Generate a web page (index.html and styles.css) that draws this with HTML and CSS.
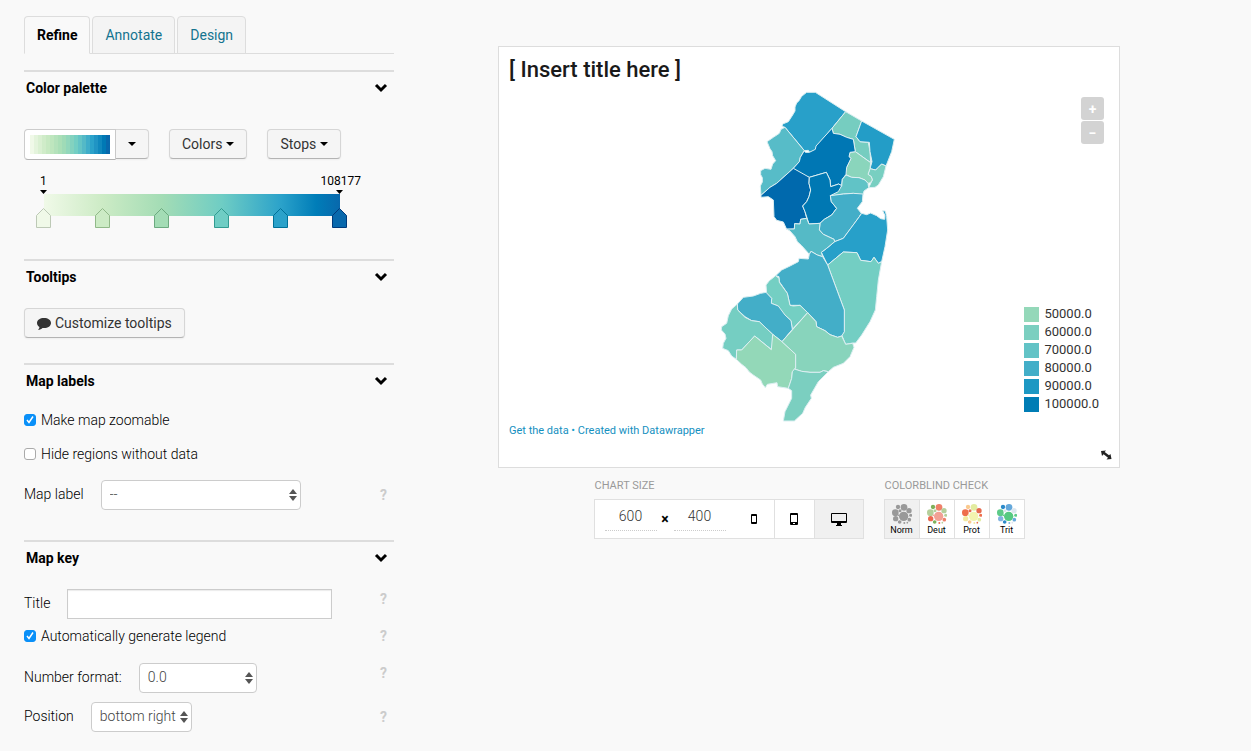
FILE: index.html
```html
<!DOCTYPE html>
<html lang="en">
<head>
<meta charset="utf-8">
<title>Chart editor</title>
<link rel="stylesheet" href="styles.css">
</head>
<body>
<svg class="defs" width="0" height="0" aria-hidden="true">
  <symbol id="chevron" viewBox="0 0 14 10"><path d="M2 2l5 5 5-5" fill="none" stroke="#000" stroke-width="3"/></symbol>
  <symbol id="blobs" viewBox="0 0 60 60">
    <circle cx="35" cy="37" r="14" fill="var(--a)"/><circle cx="36" cy="10" r="10" fill="var(--b)"/>
    <circle cx="10" cy="26" r="10" fill="var(--c)"/><circle cx="51" cy="20" r="8" fill="var(--d)"/>
    <circle cx="11" cy="44" r="8" fill="var(--e)"/><circle cx="18" cy="9" r="6.500" fill="var(--f)"/>
    <circle cx="23" cy="54" r="5.500" fill="var(--f)"/><circle cx="56" cy="34" r="4.500" fill="var(--c)"/>
    <circle cx="52" cy="47" r="5.500" fill="var(--b)"/><circle cx="24" cy="20" r="4.500" fill="var(--d)"/>
    <circle cx="37" cy="57" r="3" fill="var(--e)"/><circle cx="46" cy="56" r="2.500" fill="var(--d)"/>
    <circle cx="19" cy="34" r="2.500" fill="var(--a)"/>
  </symbol>
</svg>
<div class="page">
  <aside class="sidebar">
    <nav class="tabs">
      <a class="tab active" href="#refine">Refine</a>
      <a class="tab" href="#annotate">Annotate</a>
      <a class="tab" href="#design">Design</a>
    </nav>

    <section class="section palette">
      <h3>Color palette <svg class="chevron"><use href="#chevron"/></svg></h3>
      <div class="palette-row">
        <div class="split">
          <button class="swatch" aria-label="Current palette"><span class="ramp"></span></button>
          <button class="btn toggle" aria-label="Choose palette"><span class="caret"></span></button>
        </div>
        <button class="btn">Colors<span class="caret"></span></button>
        <button class="btn">Stops<span class="caret"></span></button>
      </div>
      <div class="scale">
        <div class="scale-labels"><span>1</span><span>108177</span></div>
        <svg class="scale-bar" width="313" height="40" viewBox="0 0 313 40">
          <defs><linearGradient id="ramp">
            <stop offset="0" stop-color="#f0f9e8"/><stop offset=".2" stop-color="#ccebc5"/>
            <stop offset=".4" stop-color="#a3dcb5"/><stop offset=".6" stop-color="#6fcdc4"/>
            <stop offset=".8" stop-color="#2ba2ca"/><stop offset=".92" stop-color="#007db8"/><stop offset="1" stop-color="#0868ac"/>
          </linearGradient></defs>
          <rect x="8" y="6" width="296" height="22" fill="url(#ramp)"/>
          <path d="M4 2h7l-3.500 4zM300 2h7l-3.500 4z"/>
          <path d="M.5 39.500v-12l7-7 7 7v12z" fill="#f0f9e8" stroke="#bdc9b6"/>
          <path d="M59.500 39.500v-12l7-7 7 7v12z" fill="#ccebc5" stroke="#91b989"/>
          <path d="M118.500 39.500v-12l7-7 7 7v12z" fill="#a3dcb5" stroke="#6caa80"/>
          <path d="M178.500 39.500v-12l7-7 7 7v12z" fill="#6fcdc4" stroke="#329b91"/>
          <path d="M237.500 39.500v-12l7-7 7 7v12z" fill="#2ba2ca" stroke="#007198"/>
          <path d="M296.500 39.500v-12l7-7 7 7v12z" fill="#0868ac" stroke="#003a7b"/>
        </svg>
      </div>
    </section>

    <section class="section tooltips">
      <h3>Tooltips <svg class="chevron"><use href="#chevron"/></svg></h3>
      <button class="btn"><svg class="comment" width="14" height="13" viewBox="0 0 14 13"><path d="M7 1c4 0 7 2 7 5s-3 5-7 5l-1.500-.1C4.500 12 3 12.600 1 12.700c1-.8 1.400-1.600 1.400-2.700C1 9.100 0 7.700 0 6c0-3 3-5 7-5z" fill="#333"/></svg>Customize tooltips</button>
    </section>

    <section class="section labels">
      <h3>Map labels <svg class="chevron"><use href="#chevron"/></svg></h3>
      <label class="check"><input type="checkbox" checked>Make map zoomable</label>
      <label class="check"><input type="checkbox">Hide regions without data</label>
      <div class="field">
        <label for="map-label">Map label</label>
        <span class="select wide"><select id="map-label"><option>--</option></select></span>
        <span class="help">?</span>
      </div>
    </section>

    <section class="section key">
      <h3>Map key <svg class="chevron"><use href="#chevron"/></svg></h3>
      <div class="field title-field">
        <label for="title">Title</label>
        <input id="title" class="text" type="text">
        <span class="help">?</span>
      </div>
      <div class="field legend-field">
        <label class="check"><input type="checkbox" checked>Automatically generate legend</label>
        <span class="help">?</span>
      </div>
      <div class="field format-field">
        <label for="format">Number format:</label>
        <span class="select medium"><select id="format"><option>0.0</option></select></span>
        <span class="help">?</span>
      </div>
      <div class="field">
        <label for="position">Position</label>
        <span class="select small"><select id="position"><option>bottom right</option></select></span>
        <span class="help">?</span>
      </div>
    </section>
  </aside>

  <main class="preview">
    <div class="chart">
      <h1>[ Insert title here ]</h1>
      <svg class="map" width="200" height="350" viewBox="-3 0 600 1050" role="img" aria-label="Map of New Jersey counties">
        <g stroke="#dceff2" stroke-width="3" stroke-linejoin="round">
          <path fill="#28a0c9" d="M216 139l2-7 17-7 13-20 7-12 0-12 5-12 7-7 8-13 15-12h26l91 58-41 50-41 47-2 10-7 10-11 5-7-1-3-5-12 1-58-70z"/>
          <path fill="#57bcc8" d="M225 142l58 70-12 20-3 13-18 20-50 45-20 12-27 24-2-28 6-12v-13l-5-9v-12l13-7 18 3 5-16 9-10-9-15-2-12-6-9-9-21 19-13 18-12 5-12z"/>
          <path fill="#76cdc0" d="M407 95l48 28-17 47 12 15 25 2 5 28 2 33-46-33-6-37-20-6-20-9-20-3-4-15z"/>
          <path fill="#239dc7" d="M455 123l98 55-8 37-17 43-13-6-10 10-8 8-17-4 6-21-6-30-2-28-28-2-12-15z"/>
          <path fill="#78cfc1" d="M480 266l17 4 8-8 10-10 13 6-8 32-15 25-10 7-19 1 11-23-3-10-10-7z"/>
          <path fill="#8ad5bc" d="M436 215l46 33-2 18-6 17 10 7 3 10-6 8-7 2-9-10-18-7-22-1-19-9 4-21 13-27-6-5 3-13z"/>
          <path fill="#0077b4" d="M366 145l4 15 20 3 20 9 20 6 6 37-16 2-3 13 6 5-13 27-2 21-11 15-2 19-9-5-24 8-2-20-11-23-51 15-34-9-14-18 18-20 3-13 12-20 3 5h12l18-9 2-10z"/>
          <path fill="#61c3c6" d="M408 285l17 7 22 1 18 7 9 10 2 13-14 10-3 12-29-5-30 2-38 6 15-12 18-17 2-21z"/>
          <path fill="#0069ad" d="M250 265l48 27-1 18 5 20-5 20-7 15-12 13 7 17 5 20-18 3-2 14-16-1-1 16-23 1-10-22-20-5-8-11-2-50-15-10-22 2v-6l27-24 20-12z"/>
          <path fill="#0078b3" d="M298 292l51-15 11 23 2 20 24-8 9 5-10 18-24 12 3 18 16 20-15 20-22 13-13 12-33 2-12-37-7-17 12-13 7-15 5-20-5-20z"/>
          <path fill="#43aec8" d="M361 347l39-5 30-2 29 2-2 23-15 20 12 15-6 10-18 25-30 40-26 10-2-7-32-15-12-13 2-20 13-12 22-13 15-20-16-20z"/>
          <path fill="#27a0c9" d="M448 410l7-10 15 4 12-5 18 8 12 9 12 2 1-11-7-15 8 1 4 17 3 40-8 50-10 45-10 5-13-18-9 13-31-4-11-23-41-2-47 39-19-38 16-12 24-20 26-10z"/>
          <path fill="#55bac6" d="M230 447l23 0 1-16 16 1 2-14 18-3 7 17 33-2-2 20 12 13 32 15 2 7-24 20-16 12 4 13-16-5-19-11-5 9-23-26-13-12-7-15-15-17z"/>
          <path fill="#73cec3" d="M353 555l47-39 41 2 11 23 31 4 9-13 13 18 10-5-10 55-5 50-4 40-16 35-25 40-18 24h-9l-21 4-12-28 8-10v-65z"/>
          <path fill="#43aec8" d="M303 514l19 11 16 5 15 25 50 135v65l-8 13-12 4-23-8-15-12-25-12-2-15-13-15-12-12-23-22h-30l-8-36-24-35-1-15-10-3 18-17 25-12 25-13 2-10 28 2 3-14z"/>
          <path fill="#74cfc3" d="M197 587l10 8 1 12 24 33 8 36 10 2 20-2 23 22-46 50-4-26-18-17-15-15-5-12-21-8 1-15-15-15-2-25 10-13z"/>
          <path fill="#43aec8" d="M168 637l17 18-1 15 21 8 20 27 18 17 4 26-31 37-28-22-40-38-23-3-20-12-22-20-1-18 18-20 30-4 22-8z"/>
          <path fill="#75cec2" d="M82 672l1 18 22 22 20 10 23 3 40 38v30l-2 17-52-42-39 42H80l-1 28-14-10-10-16-17-7 2-15 8-15-3-13-11-12 1-10 15-10 5-23 10-20z"/>
          <path fill="#93d8b8" d="M134 768l50 41 4-46 28 22 41 38v42l-10 10-2 20-10 30-32-5-2-12-29 5-6 10-9-11-5-12-22-15-12-9-10-13-13-10-16-15 1-28h15z"/>
          <path fill="#88d4bc" d="M293 698l25 27 2 15 25 12 15 12 23 8 12-4 12 25 21-3 4 12-12 28-20 20-30 12-15 13-15-3-10 5h-30l-25-3-22-7 4-2v-42l-41-38z"/>
          <path fill="#7bcfc0" d="M253 867l22 7 25 3h30l10-5 15 3-10 10-20 20-23 40 2 10-18 27-8 18-25 23h-33l5-28 20-40v-23l-10-7 10-30 2-20z"/>
        </g>
      </svg>
      <p class="credits"><a href="#data">Get the data</a> • <a href="#about">Created with Datawrapper</a></p>
      <div class="zoom"><button aria-label="Zoom in">+</button><button aria-label="Zoom out">−</button></div>
      <ul class="legend">
        <li><i class="c1"></i>50000.0</li><li><i class="c2"></i>60000.0</li><li><i class="c3"></i>70000.0</li>
        <li><i class="c4"></i>80000.0</li><li><i class="c5"></i>90000.0</li><li><i class="c6"></i>100000.0</li>
      </ul>
      <svg class="resize" width="11" height="10" viewBox="0 0 11 10"><path d="M0 1l5-.5-1.300 1.600 4.300 3.200L9.500 4l1 5-5 .5L7 7.700 2.600 4.300 1 6z" fill="#222"/></svg>
    </div>

    <div class="tools">
      <div class="tool">
        <h4>CHART SIZE</h4>
        <div class="bar">
          <div class="size">
            <input type="text" value="600" aria-label="Width">
            <span>×</span>
            <input type="text" value="400" aria-label="Height">
          </div>
          <button class="device" aria-label="Small phone"><svg width="6" height="10" viewBox="0 0 6 10"><path fill-rule="evenodd" d="M1 0h4q1 0 1 1v8q0 1-1 1H1q-1 0-1-1V1q0-1 1-1zM1 2v6h4V2z"/></svg></button>
          <button class="device" aria-label="Large phone"><svg width="8" height="12" viewBox="0 0 8 12"><path fill-rule="evenodd" d="M1 0h6q1 0 1 1v10q0 1-1 1H1q-1 0-1-1V1q0-1 1-1zM1 2v7h6V2zM3 10v1h2v-1z"/></svg></button>
          <button class="device desktop on" aria-label="Desktop"><svg width="16" height="13" viewBox="0 0 16 13"><path fill-rule="evenodd" d="M1 0h14q1 0 1 1v8q0 1-1 1h-5v2h1v1H5v-1h1v-2H1q-1 0-1-1V1q0-1 1-1zM1 1v7h14V1z"/></svg></button>
        </div>
      </div>
      <div class="tool">
        <h4>COLORBLIND CHECK</h4>
        <div class="bar">
          <button class="vision norm on"><svg width="20" height="20"><use href="#blobs"/></svg>Norm</button>
          <button class="vision deut"><svg width="20" height="20"><use href="#blobs"/></svg>Deut</button>
          <button class="vision prot"><svg width="20" height="20"><use href="#blobs"/></svg>Prot</button>
          <button class="vision trit"><svg width="20" height="20"><use href="#blobs"/></svg>Trit</button>
        </div>
      </div>
    </div>
  </main>
</div>
</body>
</html>
```
FILE: styles.css
```css
* { box-sizing: border-box; }
body {
  margin: 0;
  background: #f9f9f9;
  color: #000;
  font: 300 14px/20px Roboto, sans-serif;
}
button, input, select { font: inherit; margin: 0; }
a { text-decoration: none; }
h1, h3, h4, p, ul { margin: 0; padding: 0; }
.defs { position: absolute; }
.page { display: flex; align-items: flex-start; }

.sidebar { flex: none; width: 394px; padding: 16px 0 16px 24px; }
.tabs { display: flex; gap: 2px; height: 38px; margin-bottom: 16px; border-bottom: 1px solid #ddd; }
.tab {
  height: 38px;
  padding: 8px 12px;
  border: 1px solid #ddd;
  border-radius: 4px 4px 0 0;
  background: #f4f4f4;
  color: #13738f;
  font-weight: 400;
}
.tab.active { background: #f9f9f9; border-bottom-color: #f9f9f9; color: #000; font-weight: 700; }

.section { border-top: 2px solid #ddd; }
.section h3 {
  display: flex;
  align-items: center;
  justify-content: space-between;
  height: 32px;
  padding: 0 6px 0 2px;
  font-size: 14px;
  font-weight: 700;
}
.chevron { width: 14px; height: 10px; }
.palette { padding-bottom: 31px; }
.tooltips { padding-bottom: 25px; }
.tooltips .btn { margin-top: 15px; }
.labels { padding-bottom: 30px; }

.btn {
  display: flex;
  align-items: center;
  height: 30px;
  padding: 0 12px;
  border: 1px solid #d6d6d6;
  border-bottom-color: #b3b3b3;
  border-radius: 4px;
  background: #f5f5f5;
  box-shadow: 0 1px 2px rgba(0, 0, 0, .05);
  color: #333;
  font-weight: 400;
}
.comment { margin-right: 4px; }
.caret { margin-left: 4px; border: 4px solid transparent; border-top-color: #000; border-bottom: 0; }
.palette-row { display: flex; gap: 20px; margin-top: 25px; }
.split { display: flex; }
.swatch {
  width: 92px;
  padding: 5px;
  border: 1px solid #ccc;
  border-bottom-color: #b3b3b3;
  border-radius: 4px 0 0 4px;
  background: #fff;
}
.ramp {
  display: block;
  width: 80px;
  height: 19px;
  background: linear-gradient(90deg, #f0f9e8 5%, #e4f4dc 5% 10%, #daf0d2 10% 15%, #d0ecc9 15% 20%, #c7e9c2 20% 25%, #bee6be 25% 30%, #b4e2bb 30% 35%, #aadfb7 35% 40%, #9fdbb7 40% 45%, #92d7bb 45% 50%, #83d2bf 50% 55%, #73cec3 55% 60%, #64c4c6 60% 65%, #54b9c7 65% 70%, #40adc9 70% 75%, #2ba2ca 75% 80%, #2094c4 80% 85%, #1088bd 85% 90%, #0079b5 90% 95%, #0868ac 95%);
}
.toggle { width: 33px; border-left: 0; border-radius: 0 4px 4px 0; }
.toggle .caret { margin: 0; }
.scale { width: 313px; margin: 11px 0 0 12px; }
.scale-labels { display: flex; justify-content: space-between; margin: 0 -12px 0 4px; height: 17px; font-size: 12px; font-weight: 400; }
.scale-bar { display: block; }

.check { display: flex; align-items: center; gap: 5px; height: 20px; }
.labels > .check { margin-top: 13px; }
.labels > .check + .check { margin-top: 14px; }
.check input {
  appearance: none;
  width: 12px;
  height: 12px;
  border: 1px solid #aaa;
  border-radius: 3px;
  background: #fff;
}
.check input:checked {
  border-color: #0a90f8;
  background: #0a90f8 url("data:image/svg+xml,%3Csvg xmlns='http://www.w3.org/2000/svg' viewBox='0 0 10 10'%3E%3Cpath d='M2 5l2 2.500 4-6' fill='none' stroke='white' stroke-width='1.500'/%3E%3C/svg%3E");
}
.field { display: flex; align-items: center; height: 30px; }
.labels .field { margin-top: 16px; }
.key h3 + .field { margin-top: 15px; }
.key .legend-field { height: 20px; margin-top: 7px; }
.key .format-field { margin: 17px 0 9px; }
.field > label { padding-bottom: 2px; }
.field > .check { padding: 0; }
.field > label + span, .field > .text { margin-left: 17px; }
.field > .help { margin: 0 7px 0 auto; color: #ccc; font-weight: 700; }
.title-field > .help, .format-field > .help { align-self: flex-start; }
.text { width: 265px; height: 30px; border: 1px solid #ccc; background: #fff; box-shadow: inset 0 1px 1px rgba(0, 0, 0, .08); }
.select { position: relative; height: 30px; }
.select::before, .select::after { content: ""; position: absolute; right: 4px; border: 4px solid transparent; pointer-events: none; }
.select::before { top: 9px; border-top: 0; border-bottom: 5px solid #555; }
.select::after { top: 16px; border-bottom: 0; border-top: 5px solid #555; }
.select select {
  appearance: none;
  width: 100%;
  height: 30px;
  padding: 0 8px 2px;
  border: 1px solid #ccc;
  border-radius: 4px;
  background: #fff;
  color: #444;
}
.wide { width: 200px; }
.medium { width: 118px; }
.small { width: 101px; }

.preview { flex: 1; padding: 46px 131px 0 104px; }
.chart { position: relative; padding: 7px 10px 31px; border: 1px solid #ddd; background: #fff; }
h1 { height: 26px; color: #1a1a1a; font-size: 22px; line-height: 32px; font-weight: 500; }
.map { display: block; margin: 0 auto; }
.credits { height: 11px; margin-top: -5px; color: #18a1cd; font-size: 11px; line-height: 11px; font-weight: 400; }
.credits a { color: #1590bf; }
.zoom { position: absolute; top: 50px; right: 15px; display: grid; gap: 1px; }
.zoom button { width: 23px; height: 23px; padding: 0; border: 0; border-radius: 3px; background: #d3d3d3; color: #fff; font-weight: 700; line-height: 20px; }
.legend { position: absolute; right: 20px; bottom: 54px; list-style: none; font-size: 13px; font-weight: 400; color: #333; }
.legend li { display: flex; gap: 5px; height: 18px; line-height: 17px; }
.legend i { width: 15px; height: 15px; margin-top: 2px; }
.c1 { background: #94d8b9; }
.c2 { background: #7bcfc0; }
.c3 { background: #62c3c6; }
.c4 { background: #43aec8; }
.c5 { background: #1d98c3; }
.c6 { background: #007db5; }
.resize { position: absolute; right: 7px; bottom: 7px; }

.tools { display: flex; justify-content: center; gap: 20px; margin-top: 7px; }
h4 { height: 24px; color: #999; font-size: 11px; line-height: 21px; font-weight: 400; }
.tool h4 { padding-left: 1px; }
.bar { display: flex; height: 40px; border: 1px solid #e0e0e0; background: #fff; }
.size { display: flex; align-items: center; padding: 0 9px 0 10px; }
.size input { width: 52px; height: 28px; margin-bottom: 4px; padding: 0 0 2px; border: 0; border-bottom: 1px dotted #ccc; background: none; color: #333; text-align: center; }
.size span { width: 17px; text-align: center; font-weight: 700; }
.device { display: grid; place-items: center; width: 40px; padding: 0; border: 0; border-right: 1px solid #e0e0e0; background: #fff; }
.desktop { width: 48px; border-right: 0; }
.bar .on { background: #f0f0f0; }
.vision { width: 35px; padding: 2px 0 0; border: 0; border-right: 1px solid #e0e0e0; background: #fff; font-size: 9px; line-height: 11px; font-weight: 400; }
.vision:last-child { border-right: 0; width: 34px; }
.vision svg { display: block; margin: 0 auto 1px; }
.norm { --a: #999; --b: #999; --c: #999; --d: #999; --e: #999; --f: #999; }
.deut { --a: #f2a094; --b: #ef8069; --c: #b5cf9b; --d: #b5cf9b; --e: #ec6a50; --f: #7eb05a; }
.prot { --a: #f3f3af; --b: #e3eca0; --c: #ee6e4c; --d: #e56a4e; --e: #f2e9a0; --f: #fac98e; }
.trit { --a: #55c981; --b: #64a8db; --c: #5dca88; --d: #dbe6ee; --e: #82b4df; --f: #2b8ac9; }
```
